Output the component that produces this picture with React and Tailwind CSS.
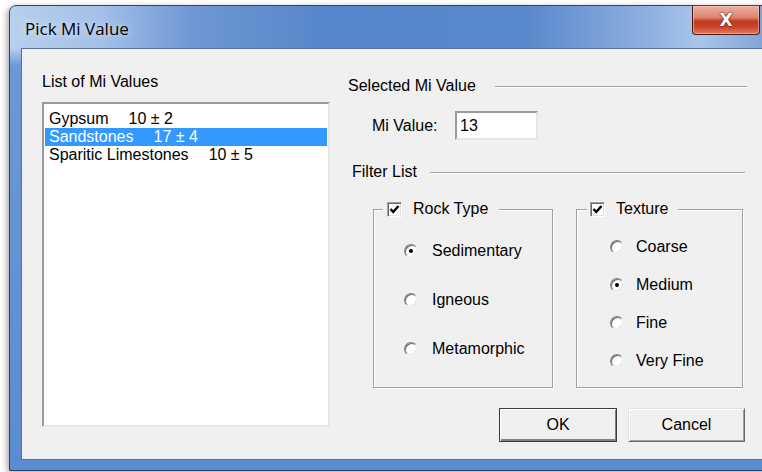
import { useState } from "react";

const rockTypes = ["Sedimentary", "Igneous", "Metamorphic"];
const textures = ["Coarse", "Medium", "Fine", "Very Fine"];

const miValues = [
    { name: "Gypsum", value: "10 ± 2" },
    { name: "Sandstones", value: "17 ± 4" },
    { name: "Sparitic Limestones", value: "10 ± 5" },
];

const CheckBox = ({ checked }) => (
    <span className="flex h-[15px] w-[15px] items-center justify-center border border-t-[#a0a0a0] border-l-[#a0a0a0] border-r-white border-b-white bg-white shadow-[inset_1px_1px_0_#696969,inset_-1px_-1px_0_#e3e3e3]">
        {checked && (
            <svg width="11" height="11" viewBox="0 0 11 11">
                <polyline
                    points="1.5,5 4.2,8 9.5,2"
                    fill="none"
                    stroke="#000"
                    strokeWidth="2.4"
                />
            </svg>
        )}
    </span>
);

const Radio = ({ checked }) => (
    <span className="flex h-[14px] w-[14px] items-center justify-center rounded-full border border-t-[#808080] border-l-[#808080] border-r-[#f4f4f4] border-b-[#f4f4f4] bg-white shadow-[inset_1px_1px_0_#6a6a6a,inset_-1px_-1px_0_#e3e3e3]">
        {checked && <span className="h-[4px] w-[4px] rounded-full bg-black" />}
    </span>
);

const Separator = () => (
    <div className="h-px flex-1 bg-[#a0a0a0] shadow-[0_1px_0_#fff]" />
);

export default function App() {
    const [selected, setSelected] = useState(1);
    const [rock, setRock] = useState(0);
    const [texture, setTexture] = useState(1);

    return (
        <div className="h-[472px] w-[762px] overflow-hidden bg-white pt-[5px] pl-[9px] font-['Liberation_Sans',Arial,sans-serif] text-[16px] text-black">
            <div className="h-[466px] w-[800px] rounded-t-[7px] border border-[#2f4462] bg-[linear-gradient(180deg,rgba(108,152,214,0)_0px,rgba(108,152,214,0)_42px,#6d98d6_60px,#5b8bd0_100%),linear-gradient(90deg,#b9d0ee_0px,#a3c0e8_90px,#6f98d4_180px,#5585ca_320px,#5a89cd_520px,#8fb1e0_640px,#a9c5ea_690px,#7ba1d8_760px)] shadow-[-2px_2px_6px_rgba(0,0,0,0.35)]">
                {/* title bar */}
                <div className="flex h-[42px] items-start justify-between pr-[48px]">
                    <span className="mt-[11px] ml-[15px] font-['Open_Sans','Noto_Sans',sans-serif] text-[17px] leading-[24px] text-black [text-shadow:0_0_8px_rgba(255,255,255,0.9)]">
                        Pick Mi Value
                    </span>
                    <button
                        type="button"
                        className="flex h-[29px] w-[68px] items-center justify-center rounded-b-[4px] border border-t-0 border-[#4b1a12] bg-[linear-gradient(180deg,#eab0a2_0%,#de8571_40%,#c23a1f_55%,#c9452a_75%,#e07b62_100%)] shadow-[inset_0_0_0_1px_rgba(255,210,200,0.5)]"
                    >
                        <span className="font-['DejaVu_Sans',sans-serif] text-[17px] font-bold leading-none text-white [text-shadow:0_0_2px_#5a1208,0_0_1px_#5a1208]">
                            X
                        </span>
                    </button>
                </div>

                {/* client area */}
                <div className="mx-[11px] flex h-[412px] border border-[#5b7193] bg-[#f0f0f0]">
                    {/* list of values */}
                    <div className="flex flex-col pt-[23px] pl-[20px]">
                        <span className="leading-[20px]">List of Mi Values</span>
                        <div className="mt-[10px] h-[325px] w-[288px] border-2 border-t-[#9a9a9a] border-l-[#9a9a9a] border-r-[#e6e6e6] border-b-[#e6e6e6] bg-white pt-[6px]">
                            {miValues.map((item, i) => (
                                <div
                                    key={item.name}
                                    onClick={() => setSelected(i)}
                                    className={`mx-px flex h-[18px] items-center pl-[4px] leading-[18px] ${
                                        selected === i ? "bg-[#3399ff] text-white" : "text-black"
                                    }`}
                                >
                                    <span>{item.name}</span>
                                    <span className="ml-[20px]">{item.value}</span>
                                </div>
                            ))}
                        </div>
                    </div>

                    {/* selection and filters */}
                    <div className="ml-[18px] flex w-[399px] flex-col pt-[27px]">
                        <div className="flex h-[20px] items-center">
                            <span className="w-[147px] leading-[20px]">Selected Mi Value</span>
                            <Separator />
                        </div>

                        <div className="mt-[15px] flex items-center pl-[24px]">
                            <span className="w-[83px] leading-[20px]">Mi Value:</span>
                            <div className="h-[29px] w-[83px] border-2 border-t-[#9a9a9a] border-l-[#9a9a9a] border-r-[#e6e6e6] border-b-[#e6e6e6] bg-white pl-[3px] leading-[25px]">
                                13
                            </div>
                        </div>

                        <div className="mt-[22px] flex h-[20px] items-center pl-[4px] pr-[2px]">
                            <span className="w-[78px] leading-[20px]">Filter List</span>
                            <Separator />
                        </div>

                        <div className="mt-[17px] flex gap-[23px] pl-[25px]">
                            <fieldset className="m-0 h-[189px] w-[180px] border border-[#a0a0a0] p-0 shadow-[inset_1px_1px_0_#fff,1px_1px_0_#fff]">
                                <legend className="ml-[9px] flex h-[20px] items-center gap-[11px] bg-[#f0f0f0] pl-[4px] pr-[11px]">
                                    <CheckBox checked />
                                    <span className="leading-[20px]">Rock Type</span>
                                </legend>
                                <div className="flex flex-col gap-[29px] pt-[22px] pl-[30px]">
                                    {rockTypes.map((r, i) => (
                                        <div
                                            key={r}
                                            onClick={() => setRock(i)}
                                            className="flex h-[20px] items-center gap-[14px]"
                                        >
                                            <Radio checked={rock === i} />
                                            <span className="leading-[20px]">{r}</span>
                                        </div>
                                    ))}
                                </div>
                            </fieldset>

                            <fieldset className="m-0 h-[189px] w-[167px] border border-[#a0a0a0] p-0 shadow-[inset_1px_1px_0_#fff,1px_1px_0_#fff]">
                                <legend className="ml-[10px] flex h-[20px] items-center gap-[11px] bg-[#f0f0f0] pl-[3px] pr-[10px]">
                                    <CheckBox checked />
                                    <span className="leading-[20px]">Texture</span>
                                </legend>
                                <div className="flex flex-col gap-[18px] pt-[18px] pl-[33px]">
                                    {textures.map((t, i) => (
                                        <div
                                            key={t}
                                            onClick={() => setTexture(i)}
                                            className="flex h-[20px] items-center gap-[12px]"
                                        >
                                            <Radio checked={texture === i} />
                                            <span className="leading-[20px]">{t}</span>
                                        </div>
                                    ))}
                                </div>
                            </fieldset>
                        </div>

                        <div className="mt-[20px] flex gap-[11px] pl-[151px]">
                            <button
                                type="button"
                                className="h-[34px] w-[118px] border border-[#3c3c3c] bg-[#f0f0f0] text-[16px] shadow-[inset_1px_1px_0_#fff,inset_-1px_-2px_0_#808080]"
                            >
                                OK
                            </button>
                            <button
                                type="button"
                                className="h-[34px] w-[117px] border border-t-[#e3e3e3] border-l-[#e3e3e3] border-r-[#696969] border-b-[#696969] bg-[#f0f0f0] text-[16px] shadow-[inset_1px_1px_0_#fff,inset_-1px_-1px_0_#a0a0a0]"
                            >
                                Cancel
                            </button>
                        </div>
                    </div>
                </div>
            </div>
        </div>
    );
}
